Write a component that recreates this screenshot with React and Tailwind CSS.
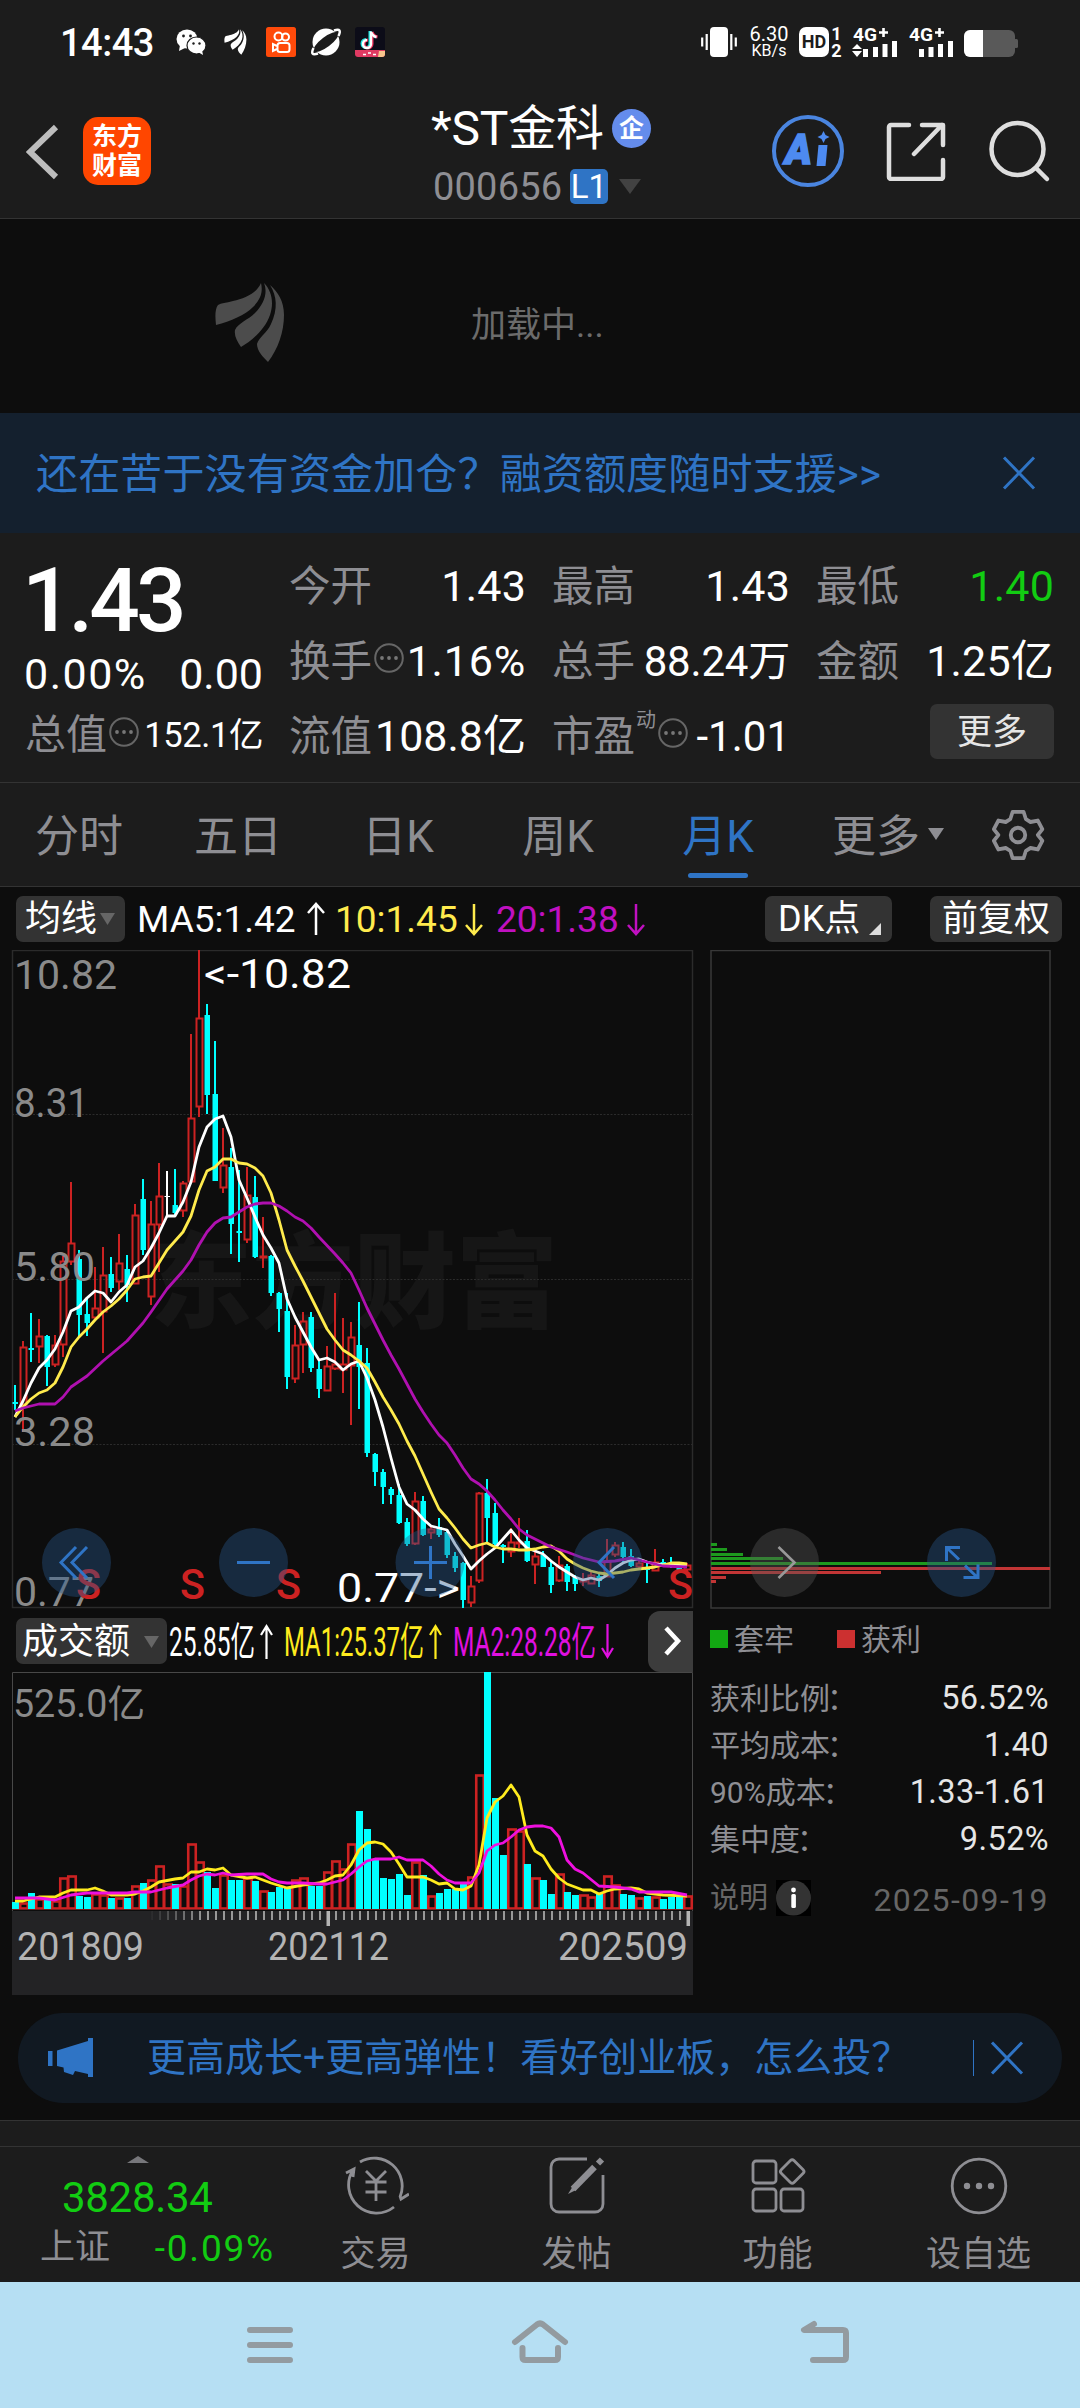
import React from "react";

const FONT = 'Roboto, "Noto Sans CJK SC", sans-serif';
const CYAN = "#00ffff";
const RED = "#cc2222";

// [color, high, bodyTop, bodyBottom, low] per month, in chart units
const CANDLES = [
  ["c", 1385, 1402, 1404, 1410], ["r", 1341, 1347, 1405, 1432], ["c", 1313, 1348, 1350, 1362], ["r", 1319, 1336, 1347, 1363],
  ["c", 1335, 1336, 1367, 1386], ["r", 1335, 1345, 1365, 1367], ["r", 1256, 1261, 1345, 1357], ["r", 1182, 1243, 1262, 1265],
  ["c", 1250, 1259, 1315, 1337], ["c", 1297, 1314, 1323, 1336], ["r", 1267, 1308, 1318, 1320], ["r", 1247, 1275, 1312, 1353],
  ["c", 1257, 1274, 1288, 1292], ["r", 1234, 1263, 1282, 1290], ["c", 1255, 1269, 1285, 1302], ["r", 1204, 1215, 1284, 1284],
  ["c", 1179, 1199, 1250, 1255], ["r", 1201, 1224, 1297, 1305], ["r", 1163, 1196, 1225, 1272], ["w", 1171, 1196, 1197, 1217],
  ["c", 1169, 1205, 1213, 1215], ["r", 1181, 1183, 1211, 1217], ["r", 1034, 1118, 1182, 1183], ["r", 950, 1018, 1107, 1117],
  ["c", 1004, 1015, 1095, 1114], ["c", 1041, 1094, 1181, 1181], ["r", 1128, 1165, 1188, 1193], ["c", 1148, 1167, 1224, 1254],
  ["c", 1170, 1231, 1233, 1262], ["r", 1167, 1195, 1240, 1243], ["c", 1176, 1197, 1257, 1258], ["r", 1217, 1256, 1257, 1268],
  ["c", 1255, 1256, 1293, 1296], ["c", 1292, 1293, 1309, 1332], ["c", 1293, 1311, 1377, 1389], ["r", 1325, 1345, 1379, 1383],
  ["r", 1312, 1321, 1345, 1373], ["c", 1312, 1317, 1368, 1372], ["c", 1360, 1369, 1389, 1398], ["r", 1346, 1366, 1391, 1391],
  ["r", 1293, 1364, 1369, 1370], ["r", 1318, 1364, 1370, 1393], ["r", 1322, 1337, 1366, 1425], ["c", 1302, 1345, 1367, 1409],
  ["c", 1348, 1363, 1453, 1457], ["c", 1453, 1454, 1472, 1486], ["c", 1469, 1472, 1487, 1504], ["c", 1487, 1489, 1495, 1504],
  ["c", 1484, 1495, 1523, 1524], ["c", 1518, 1522, 1544, 1546], ["r", 1492, 1501, 1544, 1545], ["c", 1496, 1501, 1535, 1536],
  ["r", 1527, 1529, 1533, 1539], ["c", 1518, 1527, 1535, 1537], ["c", 1530, 1532, 1555, 1558], ["c", 1552, 1556, 1568, 1572],
  ["c", 1562, 1563, 1600, 1608], ["r", 1576, 1586, 1603, 1607], ["r", 1492, 1493, 1581, 1583], ["c", 1479, 1493, 1518, 1542],
  ["c", 1503, 1513, 1544, 1546], ["c", 1544, 1545, 1547, 1563], ["r", 1528, 1542, 1552, 1557], ["r", 1518, 1542, 1543, 1548],
  ["c", 1530, 1541, 1561, 1562], ["r", 1548, 1556, 1565, 1584], ["c", 1551, 1555, 1567, 1567], ["c", 1560, 1567, 1585, 1593],
  ["r", 1556, 1565, 1581, 1582], ["c", 1564, 1566, 1582, 1591], ["c", 1575, 1577, 1584, 1591], ["r", 1573, 1579, 1582, 1586],
  ["r", 1572, 1575, 1584, 1584], ["c", 1572, 1576, 1581, 1587], ["r", 1539, 1561, 1577, 1577], ["r", 1542, 1545, 1555, 1557],
  ["c", 1542, 1547, 1557, 1562], ["c", 1549, 1556, 1566, 1567], ["r", 1560, 1563, 1567, 1569], ["c", 1563, 1567, 1570, 1583],
  ["r", 1549, 1562, 1571, 1571], ["c", 1559, 1562, 1564, 1567], ["c", 1557, 1565, 1567, 1568], ["c", 1565, 1568, 1570, 1573],
  ["r", 1563, 1565, 1570, 1571],
];

const VOLUME_TOPS = [
  1902, 1902, 1893, 1898, 1900, 1900, 1877, 1875, 1896, 1897, 1893, 1894, 1898, 1897, 1898, 1885, 1883, 1879, 1865, 1883, 1884,
  1885, 1843, 1861, 1872, 1888, 1874, 1880, 1880, 1877, 1881, 1890, 1892, 1887, 1888, 1879, 1877, 1886, 1886, 1871, 1860, 1868,
  1843, 1811, 1829, 1860, 1878, 1879, 1874, 1895, 1861, 1875, 1895, 1893, 1889, 1889, 1884, 1876, 1774, 1672, 1798, 1855, 1828,
  1830, 1864, 1877, 1880, 1894, 1873, 1892, 1895, 1894, 1896, 1894, 1875, 1884, 1894, 1895, 1897, 1896, 1896, 1899, 1897, 1897,
  1895,
];

// Moving averages: [month index, y]
const MA5 = [
  1417, 1401, 1383, 1368, 1360, 1349, 1332, 1311, 1307, 1298, 1291, 1293, 1302, 1292, 1285, 1267, 1261, 1248, 1233, 1216, 1216,
  1202, 1182, 1147, 1127, 1119, 1116, 1137, 1180, 1198, 1217, 1235, 1248, 1263, 1299, 1317, 1332, 1347, 1360, 1358, 1362, 1370,
  1364, 1361, 1378, 1400, 1427, 1458, 1487, 1504, 1510, 1519, 1526, 1528, 1530, 1544, 1556, 1569, 1561, 1554, 1548, 1539, 1530,
  1540, 1548, 1551, 1554, 1561, 1567, 1572, 1577, 1580, 1578, 1580, 1575, 1568, 1563, 1560, 1559, 1562, 1564, 1565, 1565, 1565,
  1566,
].map((y, i) => [i, y]);

const MA10 = [
  1417, 1407, 1399, 1393, 1390, 1383, 1367, 1347, 1337, 1329, 1320, 1312, 1306, 1299, 1290, 1279, 1277, 1276, 1263, 1250, 1241,
  1232, 1216, 1190, 1171, 1167, 1159, 1159, 1163, 1164, 1168, 1176, 1193, 1220, 1250, 1266, 1281, 1297, 1313, 1329, 1340, 1350,
  1355, 1361, 1368, 1382, 1397, 1410, 1424, 1441, 1456, 1474, 1492, 1509, 1518, 1528, 1539, 1548, 1545, 1543, 1547, 1549, 1549,
  1550, 1550, 1549, 1547, 1546, 1551, 1559, 1564, 1568, 1571, 1573, 1574, 1573, 1572, 1570, 1569, 1568, 1567, 1565, 1563, 1563,
  1564,
].map((y, i) => [i, y]);

const MA20 = [
  [0, 1411], [1, 1408], [2, 1406], [3, 1404], [5, 1404], [6, 1397], [7, 1387], [9, 1376], [11, 1361], [14, 1341], [15, 1332],
  [16, 1323], [17, 1312], [19, 1289], [21, 1271], [22, 1260], [23, 1245], [24, 1232], [25, 1223], [26, 1218], [27, 1217],
  [28, 1212], [29, 1207], [30, 1204], [31, 1203], [32, 1203], [33, 1206], [34, 1211], [35, 1217], [36, 1221], [37, 1228],
  [38, 1237], [40, 1254], [41, 1263], [42, 1273], [43, 1290], [44, 1308], [45, 1324], [46, 1340], [47, 1355], [48, 1369],
  [49, 1384], [50, 1399], [51, 1412], [52, 1424], [53, 1435], [54, 1443], [55, 1455], [56, 1468], [57, 1479], [58, 1484],
  [59, 1491], [60, 1500], [61, 1510], [62, 1519], [63, 1529], [64, 1535], [65, 1539], [67, 1547], [69, 1552], [71, 1558],
  [73, 1562], [75, 1561], [77, 1558], [79, 1562], [81, 1566], [84, 1567],
];

const VMA1 = [
  [0, 1901], [1, 1901], [2, 1899], [3, 1897], [5, 1897], [6, 1893], [7, 1890], [9, 1890], [10, 1888], [11, 1891], [12, 1895],
  [14, 1895], [15, 1894], [16, 1891], [17, 1887], [18, 1882], [20, 1879], [21, 1878], [22, 1872], [23, 1872], [24, 1869],
  [25, 1870], [26, 1868], [27, 1875], [29, 1878], [30, 1877], [32, 1883], [34, 1888], [36, 1885], [38, 1883], [39, 1880],
  [40, 1876], [41, 1875], [42, 1865], [43, 1850], [44, 1843], [45, 1842], [46, 1844], [47, 1852], [48, 1864], [49, 1877],
  [51, 1877], [52, 1880], [53, 1884], [54, 1883], [55, 1889], [56, 1890], [57, 1886], [58, 1865], [59, 1818], [60, 1802],
  [61, 1796], [62, 1785], [63, 1797], [64, 1835], [65, 1851], [66, 1856], [67, 1869], [68, 1878], [69, 1884], [71, 1890],
  [72, 1890], [73, 1894], [74, 1891], [75, 1889], [77, 1888], [78, 1889], [79, 1893], [81, 1895], [84, 1896],
];

const VMA2 = [
  [0, 1898], [3, 1898], [5, 1900], [7, 1895], [9, 1893], [14, 1893], [15, 1892], [17, 1892], [19, 1888], [21, 1885], [22, 1880],
  [23, 1876], [24, 1874], [25, 1875], [26, 1873], [27, 1875], [29, 1874], [31, 1874], [32, 1879], [33, 1882], [34, 1883],
  [36, 1883], [38, 1884], [39, 1884], [41, 1880], [42, 1874], [43, 1867], [44, 1861], [45, 1859], [47, 1859], [48, 1857],
  [49, 1860], [51, 1860], [52, 1866], [53, 1874], [54, 1880], [55, 1883], [57, 1883], [58, 1873], [59, 1851], [60, 1845],
  [61, 1843], [62, 1837], [63, 1830], [64, 1827], [65, 1826], [66, 1826], [67, 1828], [68, 1837], [69, 1860], [70, 1869],
  [71, 1873], [73, 1886], [75, 1887], [77, 1889], [78, 1892], [82, 1892], [84, 1895],
];

const px = (i) => 15 + i * 8;
const line = (pts) => pts.map(([i, y]) => `${px(i)},${y}`).join(" ");

function SvgText({ x, y, w, size = 40, fill = "#8a8a8a", weight = 400, children }) {
  return (
    <text x={x} y={y} fontSize={size} fill={fill} fontWeight={weight} textLength={w} lengthAdjust="spacingAndGlyphs" fontFamily={FONT}>
      {children}
    </text>
  );
}

function StatusBar() {
  return (
    <div className="flex h-[84px] shrink-0 items-center pl-[60px] text-white">
      <span className="w-[116px] pt-px text-[38px] leading-none font-medium tracking-[-0.5px]">14:43</span>
      <svg width="30" height="26" viewBox="0 0 30 26">
        <ellipse cx="11" cy="10" rx="10.5" ry="9.5" fill="#fff" />
        <path d="M4 16l-1 6 6-3z" fill="#fff" />
        <ellipse cx="20.500" cy="16.500" rx="9.500" ry="8.500" fill="#fff" stroke="#1c1c1c" strokeWidth="1.200" />
        <path d="M22 23l5 3-1-5z" fill="#fff" />
        <circle cx="7.500" cy="7" r="1.400" fill="#1c1c1c" /><circle cx="14.500" cy="7" r="1.400" fill="#1c1c1c" />
        <circle cx="17.500" cy="14.500" r="1.200" fill="#1c1c1c" /><circle cx="23.500" cy="14.500" r="1.200" fill="#1c1c1c" />
      </svg>
      <svg width="23" height="26" viewBox="215 282 70 81" className="ml-[18px]"><Wing fill="#fff" /></svg>
      <svg width="30" height="30" viewBox="0 0 30 30" className="ml-[19px]">
        <rect width="30" height="30" rx="2.500" fill="#ff4a0a" />
        <g fill="none" stroke="#fff" strokeWidth="2">
          <circle cx="12.500" cy="9.500" r="4" /><circle cx="19.500" cy="10" r="3.500" />
          <rect x="11.500" y="16" width="12" height="9" rx="2.500" /><path d="M11 19l-4-2v7l4-2" />
        </g>
      </svg>
      <svg width="32" height="30" viewBox="0 0 32 30" className="ml-[14px]">
        <circle cx="16" cy="15" r="13.500" fill="#fff" />
        <ellipse cx="16" cy="15" rx="15" ry="5" transform="rotate(-37 16 15)" fill="#1c1c1c" />
        <path d="M24 3.500c6-2 7 0 4.500 5.500M8 26.500c-6 2-7 0-4.500-5.500" fill="none" stroke="#fff" strokeWidth="2.500" />
      </svg>
      <svg width="30" height="30" viewBox="0 0 30 30" className="ml-[13px]">
        <rect width="30" height="30" rx="3" fill="#0c0c18" />
        <path d="M15 4v12.500a4 4 0 1 1-4-4M15 5c1 3 3 4.500 6 5" fill="none" stroke="#25e5e5" strokeWidth="3" />
        <path d="M17 5v12a4 4 0 1 1-4-4M17 5c1 3 3 4.500 5.500 5" fill="none" stroke="#f0315c" strokeWidth="3" />
        <path d="M16 4.500v12.500a4 4 0 1 1-4-4M16 5c1 3 3 4.500 5.500 5" fill="none" stroke="#fff" strokeWidth="2.400" />
        <path d="M0 23h30v4a3 3 0 0 1-3 3H3a3 3 0 0 1-3-3z" fill="#e03a62" />
        <path d="M24 24h6v3a3 3 0 0 1-3 3h-4z" fill="#f7c48c" />
        <path d="M8 27.500h3M13 26h3M18 27.500h3" stroke="#fff" strokeWidth="1.500" />
      </svg>
      <svg width="36" height="30" viewBox="0 0 36 30" className="ml-[316px]">
        <rect x="9" width="18" height="30" rx="4" fill="#fff" />
        <path d="M5.700 7v16M1.200 10.500v9M30.300 7v16M34.800 10.500v9" stroke="#fff" strokeWidth="2.200" />
      </svg>
      <div className="ml-[12px] flex w-[40px] flex-col items-center leading-none">
        <span className="text-[20px] leading-[18px]">6.30</span>
        <span className="text-[16px] leading-[16px]">KB/s</span>
      </div>
      <div className="ml-[10px] flex h-[30px] w-[30px] items-center justify-center rounded-[7px] bg-white text-[18px] leading-none font-bold text-[#1c1c1c]">HD</div>
      <div className="ml-[2px] flex w-[11px] flex-col items-center text-[18px] leading-[17px] font-bold"><span>1</span><span>2</span></div>
      <svg width="46" height="31" viewBox="0 0 46 31" className="ml-[10px] overflow-visible">
        <SvgText x={1} y={14} w={24} size={19} fill="#fff" weight={700}>4G</SvgText>
        <path d="M31.500 1v9M27 5.500h9" stroke="#fff" strokeWidth="2.600" />
        <path d="M0 22l5-5 5 5zM0 24h10l-5 6z" fill="#fff" />
        <path d="M13.500 22v8M23.500 20v10M33 17v13M42.500 14v16" stroke="#fff" strokeWidth="5" />
      </svg>
      <svg width="46" height="31" viewBox="0 0 46 31" className="ml-[10px] overflow-visible">
        <SvgText x={1} y={14} w={24} size={19} fill="#fff" weight={700}>4G</SvgText>
        <path d="M31.500 1v9M27 5.500h9" stroke="#fff" strokeWidth="2.600" />
        <path d="M13.500 22v8M23 20v10M32.500 17v13M42.500 14v16" stroke="#fff" strokeWidth="5" />
      </svg>
      <svg width="55" height="28" viewBox="0 0 55 28" className="mt-[3px] ml-[10px]">
        <rect width="51" height="27" rx="6" fill="#595959" /><rect x="50" y="9" width="4" height="9" rx="1.500" fill="#595959" />
        <path d="M19 0H6a6 6 0 0 0-6 6v15a6 6 0 0 0 6 6h13z" fill="#fff" />
      </svg>
    </div>
  );
}

function Wing({ fill }) {
  return (
    <g fill={fill}>
      <path d="M261 283c-5 11-16 15-28 18-7 2-12 2-15 4-3 4-3 11-2 20 15-4 29-10 37-18 8-8 10-15 8-24z" />
      <path d="M264 283c4 10 0 21-9 30-7 7-17 10-20 17-1 6 2 11 6 17 12-7 24-18 29-32 4-12 2-24-6-32z" />
      <path d="M270 285c8 7 14 16 14 30 0 17-6 34-16 47-5-5-11-11-11-18 2-7 10-11 14-20 7-15 6-28-1-39z" />
    </g>
  );
}

function Header() {
  return (
    <div className="flex h-[134px] shrink-0 text-white">
      <svg width="34" height="58" viewBox="0 0 34 58" className="mt-[39px] ml-[26px]">
        <path d="M30 4L4 29l26 25" fill="none" stroke="#bdbdbd" strokeWidth="6" />
      </svg>
      <div className="mt-[33px] ml-[23px] flex h-[68px] w-[68px] flex-col items-center justify-center rounded-[15px] bg-[#ff4600] text-[25px] leading-[29px] font-bold">
        <span>东方</span><span>财富</span>
      </div>
      <div className="ml-[280px] w-[231px]">
        <div className="mt-[17px] flex h-[54px] items-center">
          <span className="w-[174px] pt-[2px] text-[48px] leading-none tracking-[-0.2px] whitespace-nowrap">*ST金科</span>
          <span className="ml-[7px] flex h-[39px] w-[39px] items-center justify-center rounded-full bg-[#648cec] text-[25px] leading-none font-bold">企</span>
        </div>
        <div className="mt-[10px] flex h-[42px] items-center">
          <span className="w-[135px] pt-[2px] pl-[2px] text-[38px] leading-none tracking-[0.2px] text-[#8e8e93]">000656</span>
          <span className="ml-[4px] flex h-[35px] w-[38px] items-center justify-center rounded-[5px] bg-[#2f74c5] text-[33px] leading-none">L1</span>
          <svg width="22" height="15" viewBox="0 0 22 15" className="ml-[11px]"><path d="M0 0h22L11 15z" fill="#424242" /></svg>
        </div>
      </div>
      <svg width="74" height="74" viewBox="0 0 74 74" className="mt-[30px] ml-[109px]">
        <circle cx="37" cy="37" r="34" fill="none" stroke="#4a85e0" strokeWidth="4" />
        <text x="14" y="50" fontSize="42" fontWeight="900" fontStyle="italic" fill="#4d8af0" stroke="#4d8af0" strokeWidth="1.500" textLength="27" lengthAdjust="spacingAndGlyphs" fontFamily={FONT}>A</text>
        <path d="M47.500 31h9l-2 21h-9z" fill="#4d8af0" />
        <path d="M52.500 17l2 4 4 2-4 2-2 4-2-4-4-2 4-2z" fill="#4d8af0" />
      </svg>
      <svg width="60" height="60" viewBox="0 0 60 60" className="mt-[37px] ml-[41px]">
        <g fill="none" stroke="#dedede" strokeWidth="4.500" strokeLinecap="round" strokeLinejoin="round">
          <path d="M23 4H5a2 2 0 0 0-2 2v50a2 2 0 0 0 2 2h50a2 2 0 0 0 2-2V39M36 4h21v20M56 4L28 33" />
        </g>
      </svg>
      <svg width="64" height="64" viewBox="0 0 64 64" className="mt-[35px] ml-[42px]">
        <g fill="none" stroke="#dedede" strokeWidth="4.500" strokeLinecap="round">
          <circle cx="29.500" cy="30" r="26" /><path d="M48 49l11 11" />
        </g>
      </svg>
    </div>
  );
}

function Dots() {
  return (
    <svg width="32" height="32" viewBox="0 0 32 32" className="mt-[-8px] ml-[1px]">
      <circle cx="16" cy="16" r="13.800" fill="none" stroke="#666" strokeWidth="2" />
      <g fill="#777"><circle cx="9" cy="16" r="1.900" /><circle cx="16" cy="16" r="1.900" /><circle cx="23" cy="16" r="1.900" /></g>
    </svg>
  );
}

function Row({ label, value, dots, sup, cls = "text-[43px] tracking-[0.2px] text-white" }) {
  return (
    <div className="flex h-[75px] items-center leading-none whitespace-nowrap">
      <span className="text-[41.5px] text-[#8e8e93]">{label}</span>
      {sup && <span className="mt-[-34px] ml-[1px] text-[20px] text-[#8e8e93]">{sup}</span>}
      {dots && <Dots />}
      <span className={`ml-auto ${cls}`}>{value}</span>
    </div>
  );
}

function Quote() {
  return (
    <div className="flex h-[249px] shrink-0 gap-[26px] pt-[16px] pr-[24px] pl-[25px]">
      <div className="flex w-[238px] flex-col text-white">
        <div className="ml-[-3px] flex h-[102px] items-center text-[89px] leading-none font-medium tracking-[-4px]">1.43</div>
        <div className="flex h-[46px] items-center justify-between text-[43px] leading-none">
          <span className="ml-[-1px] tracking-[1.5px]">0.00%</span><span>0.00</span>
        </div>
        <div className="flex h-[77px] items-center text-[34.5px] leading-none whitespace-nowrap">
          <span className="text-[41px] text-[#8e8e93]">总值</span><Dots />
          <span className="ml-auto tracking-[-0.4px]">152.1亿</span>
        </div>
      </div>
      <div className="w-[237px]">
        <Row label="今开" value="1.43" /><Row label="换手" dots value="1.16%" cls="text-[43px] tracking-[0.8px] text-white" /><Row label="流值" value="108.8亿" cls="text-[43px] text-white" />
      </div>
      <div className="w-[238px]">
        <Row label="最高" value="1.43" /><Row label="总手" value="88.24万" cls="text-[42px] tracking-[-0.2px] text-white" /><Row label="市盈" sup="动" dots value="-1.01" cls="text-[42px] text-white" />
      </div>
      <div className="w-[238px]">
        <Row label="最低" value="1.40" cls="text-[43px] tracking-[0.2px] text-[#12cc12]" /><Row label="金额" value="1.25亿" />
        <div className="mt-[5px] ml-auto flex h-[55px] w-[124px] items-center justify-center rounded-[7px] bg-[#333] pt-px text-[35px] leading-none text-[#e6e6e6]">更多</div>
      </div>
    </div>
  );
}

function Tabs() {
  const cell = "flex h-full w-[160px] items-center justify-center";
  return (
    <div className="flex h-[105px] shrink-0 items-center border-y border-[#333] pt-[4px] text-[44px] leading-none text-[#8e8e93]">
      <div className="flex w-[158px] justify-center">分时</div>
      <div className={cell}>五日</div>
      <div className={cell}>日K</div>
      <div className={cell}>周K</div>
      <div className={`${cell} relative text-[#2f74c5]`}>
        月K<span className="absolute bottom-[8px] h-[5px] w-[60px] rounded-full bg-[#2f74c5]" />
      </div>
      <div className="ml-[34px] flex items-center">
        更多<svg width="16" height="12" viewBox="0 0 16 12" className="mt-[-6px] ml-[8px]"><path d="M0 0h16L8 12z" fill="#8e8e93" /></svg>
      </div>
      <svg width="54" height="54" viewBox="0 0 56 56" className="mt-[-4px] ml-[47px]">
        <g fill="none" stroke="#8e8e93" strokeWidth="4" strokeLinejoin="round">
          <path d="M22 4h12l2.500 7.500 5 3 8-1.500 5 9-5 6v0l5 6-5 9-8-1.500-5 3L34 52H22l-2.500-7.500-5-3-8 1.500-5-9 5-6-5-6 5-9 8 1.500 5-3z" transform="translate(1.500 0) scale(.95 1)" />
          <circle cx="28" cy="28" r="7.500" />
        </g>
      </svg>
    </div>
  );
}

function Arrow({ down, color, cls }) {
  return (
    <svg width="18" height="34" viewBox="0 0 18 34" className={cls}>
      <path d={down ? "M9 2v29M1 23l8 9 8-9" : "M9 33V4M1 11l8-9 8 9"} fill="none" stroke={color} strokeWidth="2.500" />
    </svg>
  );
}

function Legend() {
  return (
    <div className="flex h-[63px] shrink-0 items-center pl-[16px] text-[37px] leading-none text-white">
      <div className="flex h-[46px] w-[109px] items-center rounded-[7px] bg-[#333] pt-px pl-[9px] text-[36px]">
        均线<svg width="15" height="12" viewBox="0 0 15 12" className="ml-[3px]"><path d="M0 0h15L7.500 12z" fill="#666" /></svg>
      </div>
      <span className="ml-[11px] w-[168px] pt-[2px] pl-px">MA5:1.42</span>
      <Arrow color="#fff" cls="ml-[3px]" />
      <span className="ml-[10px] w-[130px] pt-[2px] text-[#ffeb4d]">10:1.45</span>
      <Arrow down color="#ffeb4d" />
      <span className="ml-[13px] w-[131px] pt-[2px] text-[#c010c0]">20:1.38</span>
      <Arrow down color="#c010c0" />
      <div className="ml-[120px] flex h-[46px] w-[127px] items-center rounded-[7px] bg-[#333] pt-px pl-[13px] text-[36px]">
        DK点<svg width="12" height="12" viewBox="0 0 12 12" className="mt-[20px] ml-[9px]"><path d="M12 0v12H0z" fill="#ddd" /></svg>
      </div>
      <div className="ml-[38px] flex h-[46px] w-[132px] items-center justify-center rounded-[7px] bg-[#333] pt-px text-[36px]">前复权</div>
    </div>
  );
}

function Mark({ x }) {
  return <SvgText x={x} y={1599} w={25} size={43} fill={RED} weight={500}>S</SvgText>;
}

function PriceChart() {
  return (
    <svg width="694" height="660" viewBox="0 950 694 660" className="shrink-0">
      <SvgText x={150} y={1320} w={408} size={104} fill="#161616" weight={900}>东方财富</SvgText>
      <g stroke="#2b2b2b" strokeWidth="1" strokeDasharray="2 1.500">
        <path d="M12 1114.500H692M12 1279.500H692M12 1444.500H692" />
      </g>
      <rect x="12.500" y="950.500" width="680" height="657" fill="none" stroke="#2b2b2b" strokeWidth="1.500" />
      {CANDLES.map(([k, h, t, b, l], i) => {
        const x = px(i);
        if (k === "r")
          return (
            <g key={i} stroke={RED} strokeWidth="2" fill="none">
              <path d={`M${x} ${h}V${t}M${x} ${b}V${l}`} />
              <rect x={x - 2.5} y={t + 0.5} width="6" height={Math.max(b - t - 1, 1)} />
            </g>
          );
        const c = k === "w" ? "#fff" : CYAN;
        return (
          <g key={i} fill={c}>
            <rect x={x - 1} y={h} width="2" height={l - h} />
            <rect x={x - 2.5} y={t} width="5.500" height={b - t} />
          </g>
        );
      })}
      <g fill="none" strokeWidth="2.800" strokeLinejoin="round">
        <polyline points={line(MA5)} stroke="#fff" />
        <polyline points={line(MA10)} stroke="#ffeb4d" />
        <polyline points={line(MA20)} stroke="#b010b0" />
      </g>
      <SvgText x={14} y={989} w={103}>10.82</SvgText>
      <SvgText x={14} y={1117} w={75}>8.31</SvgText>
      <SvgText x={14} y={1281} w={81}>5.80</SvgText>
      <SvgText x={14} y={1446} w={81}>3.28</SvgText>
      <SvgText x={14} y={1606} w={80}>0.77</SvgText>
      <SvgText x={204} y={988} w={147} fill="#fff">&lt;-10.82</SvgText>
      <SvgText x={337} y={1602} w={123} fill="#fff">0.77-&gt;</SvgText>
      <Mark x={76} /><Mark x={180} /><Mark x={276} /><Mark x={668} />
      <g fill="rgb(40 88 140 / .4)">
        <circle cx="76.500" cy="1562.500" r="34.500" /><circle cx="253.500" cy="1562.500" r="34.500" />
        <circle cx="430" cy="1562.500" r="34.500" /><circle cx="607.500" cy="1562.500" r="34.500" />
      </g>
      <g fill="none" stroke="#2f74c5" strokeWidth="3">
        <path d="M76 1547l-15 15.500 15 15.500M87 1547l-15 15.500 15 15.500M237 1562.500h33M414 1562.500h33M430.500 1546v33M614 1547l-15 15.500 15 15.500" />
      </g>
    </svg>
  );
}

function ChipChart() {
  const bars = [
    [1544, 6, "g"], [1549, 16, "g"], [1554, 32, "g"], [1558, 72, "g"], [1563, 281, "g"],
    [1568, 339, "r"], [1572, 170, "r"], [1577, 15, "r"], [1581, 5, "r"],
  ];
  return (
    <svg width="386" height="660" viewBox="694 950 386 660" className="shrink-0">
      <rect x="711" y="950.500" width="339" height="657.500" fill="none" stroke="#383838" strokeWidth="1.500" />
      {bars.map(([y, w, k]) => (
        <rect key={y} x="711" y={y - 1} width={w} height="3" fill={k === "g" ? "#1e9a1e" : "#c23535"} />
      ))}
      <circle cx="784.500" cy="1562.500" r="34.500" fill="rgb(88 88 88 / .4)" />
      <circle cx="961.500" cy="1562.500" r="34.500" fill="rgb(40 88 140 / .4)" />
      <path d="M778.500 1547l16 15.500-16 15.500" fill="none" stroke="#999" strokeWidth="2.600" />
      <path d="M946.500 1561v-13.500H960M947 1548l12 11.500M978 1564.500v13H963.500M977 1577l-12-11.500" fill="none" stroke="#2f74c5" strokeWidth="3" />
    </svg>
  );
}

function VolumeHeader() {
  return (
    <div className="flex h-[62px] items-center pl-[16px] text-white">
      <div className="flex h-[46px] w-[151px] items-center rounded-[7px] bg-[#333] pt-px pl-[6px] text-[36px] leading-none">
        成交额<svg width="15" height="12" viewBox="0 0 15 12" className="ml-[14px]"><path d="M0 0h15L7.500 12z" fill="#666" /></svg>
      </div>
      <svg width="474" height="46" viewBox="167 1617 474 46" className="shrink-0 overflow-visible">
        <SvgText x={169} y={1655} w={86} size={40} fill="#fff">25.85亿</SvgText>
        <SvgText x={284} y={1655} w={140} size={40} fill="#ffeb1e">MA1:25.37亿</SvgText>
        <SvgText x={453} y={1655} w={143} size={40} fill="#e010e0">MA2:28.28亿</SvgText>
        <g fill="none" strokeWidth="2.200">
          <path d="M266.500 1658v-33M261 1634l5.500-9 5.500 9" stroke="#fff" />
          <path d="M435.500 1658v-33M430 1634l5.500-9 5.500 9" stroke="#ffeb1e" />
          <path d="M607.500 1623v33M602 1647l5.500 9 5.500-9" stroke="#e010e0" />
        </g>
      </svg>
      <div className="ml-[7px] flex h-[61px] w-[45px] items-center justify-center rounded-l-[12px] bg-[#3c3c3c]">
        <svg width="18" height="30" viewBox="0 0 18 30" className="ml-[4px]"><path d="M2 2l12 13L2 28" fill="none" stroke="#fff" strokeWidth="4.500" /></svg>
      </div>
    </div>
  );
}

function VolumeChart() {
  return (
    <svg width="694" height="324" viewBox="0 1672 694 324" className="block">
      <defs>
        <linearGradient id="tickFade" x1="0" x2="1"><stop offset="0" stopColor="#232325" /><stop offset="1" stopColor="#232325" stopOpacity="0" /></linearGradient>
      </defs>
      <path d="M12.500 1911V1672.500H692.500V1911" fill="none" stroke="#484848" />
      <SvgText x={13} y={1717} w={132} size={38}>525.0亿</SvgText>
      {CANDLES.map(([k], i) => {
        const x = px(i);
        const t = VOLUME_TOPS[i];
        return k === "c" ? (
          <rect key={i} x={x - 3} y={t} width="7" height={1909 - t} fill={CYAN} />
        ) : (
          <rect key={i} x={x - 2.75} y={t + 1.5} width="7.500" height={1907 - t} fill="#0d0d0d" stroke={RED} strokeWidth="2.600" />
        );
      })}
      <path d="M12 1909.500H693" stroke="#7a2020" />
      <g fill="none" strokeWidth="2.800" strokeLinejoin="round">
        <polyline points={line(VMA1)} stroke="#ffeb1e" />
        <polyline points={line(VMA2)} stroke="#ef10df" />
      </g>
      <rect x="12" y="1911" width="681" height="84" fill="#232325" />
      {Array.from({ length: 68 }, (_, n) => (
        <rect key={n} x={151 + n * 8} y="1911" width="2" height="9" fill="#999" />
      ))}
      <rect x="148" y="1911" width="56" height="9" fill="url(#tickFade)" />
      <rect x="326.500" y="1911" width="3.500" height="15" fill="#b4b4b4" /><rect x="686.500" y="1911" width="3.500" height="15" fill="#b4b4b4" />
      <SvgText x={17} y={1960} w={127} size={38} fill="#b4b4b4">201809</SvgText>
      <SvgText x={268} y={1960} w={121} size={38} fill="#b4b4b4">202112</SvgText>
      <SvgText x={558} y={1960} w={130} size={38} fill="#b4b4b4">202509</SvgText>
    </svg>
  );
}

function ChipInfo() {
  const rows = [["获利比例", "56.52%"], ["平均成本", "1.40"], ["90%成本", "1.33-1.61"], ["集中度", "9.52%"]];
  return (
    <div className="ml-[16px] flex w-[339px] flex-col pt-[14px] text-[30px] leading-none text-[#8e8e93]">
      <div className="flex h-[30px] items-center">
        <span className="h-[18px] w-[18px] bg-[#12a812]" /><span className="ml-[6px] pt-[2px]">套牢</span>
        <span className="ml-[43px] h-[18px] w-[18px] bg-[#cc3030]" /><span className="ml-[6px] pt-[2px]">获利</span>
      </div>
      <div className="mt-[21px]">
        {rows.map(([a, b]) => (
          <div key={a} className="flex h-[47px] items-center justify-between whitespace-nowrap">
            <span>{a}<span className="-ml-[3px]">：</span></span><span className="text-[32.5px] tracking-[0.4px] text-[#e6e6e6]">{b}</span>
          </div>
        ))}
      </div>
      <div className="mt-[17px] flex h-[36px] items-center text-[#666]">
        <span className="pt-px text-[29px]">说明</span>
        <svg width="35" height="36" viewBox="0 0 35 36" className="ml-[8px]">
          <rect width="35" height="36" fill="#000" /><circle cx="17.500" cy="18" r="17.500" fill="#333" />
          <circle cx="17.500" cy="10" r="2.400" fill="#fff" /><rect x="15.300" y="14" width="4.600" height="14" rx="1.500" fill="#fff" />
        </svg>
        <span className="ml-auto pt-[3px] text-[32px] tracking-[1.4px]">2025-09-19</span>
      </div>
    </div>
  );
}

function Cross({ cls }) {
  return (
    <svg width="34" height="34" viewBox="0 0 34 34" className={cls}>
      <path d="M2 1.500l30 31M32 1.500l-30 31" stroke="#2f74c5" strokeWidth="3" />
    </svg>
  );
}

function Notice() {
  return (
    <div className="mx-[18px] mt-[17px] flex h-[90px] shrink-0 items-center rounded-full bg-[#111922] text-[39px] leading-none whitespace-nowrap text-[#2f74c5]">
      <svg width="46" height="40" viewBox="0 0 46 40" className="ml-[30px]">
        <path d="M0 13h4.500v15H0zM9 12.500L40 3V0h5v39h-5v-3l-13-3-2 4-9-3-.500-4.500L9 28z" fill="#2f74c5" />
      </svg>
      <span className="ml-[53px] w-[826px] pt-px">更高成长+更高弹性！看好创业板，怎么投？</span>
      <span className="h-[36px] w-px shrink-0 bg-[#2f74c5]" />
      <Cross cls="ml-[16px] shrink-0" />
    </div>
  );
}

function BottomBar() {
  const items = [
    ["交易", (
      <g key="a">
        <path d="M17 9a28 28 0 0 1 40 35M51 54A28 28 0 0 1 10 17M3 20l8-4-1 8M57 43l1 3 8-5" />
        <path d="M23 18l10 10 10-10M33 28v20M22.500 29h21M22.500 39h21" />
      </g>
    )],
    ["发帖", (
      <g key="b">
        <path d="M43 6H15a8 8 0 0 0-8 8v37a8 8 0 0 0 8 8h36a8 8 0 0 0 8-8V22" />
        <path d="M50.500 14L29 36" strokeWidth="6.500" /><path d="M54 10.500l4-4" strokeWidth="6" /><path d="M29 33l-5 8 8-4z" fill="#8e8e93" stroke="none" />
      </g>
    )],
    ["功能", (
      <g key="c">
        <rect x="8" y="8" width="23" height="22" rx="3" /><rect x="8" y="36" width="23" height="22" rx="3" /><rect x="36" y="36" width="22" height="22" rx="3" />
        <rect x="38.200" y="9.500" width="18" height="18" rx="2.500" transform="rotate(45 47.200 18.500)" />
      </g>
    )],
    ["设自选", (
      <g key="d">
        <circle cx="33" cy="33" r="26.800" />
        <g fill="#8e8e93" stroke="none"><circle cx="21" cy="33" r="3.200" /><circle cx="33" cy="33" r="3.200" /><circle cx="45" cy="33" r="3.200" /></g>
      </g>
    )],
  ];
  return (
    <div className="flex h-[136px] shrink-0 border-t border-[#333] text-[35px] leading-none text-[#8e8e93]">
      <div className="w-[275px]">
        <svg width="22" height="7" viewBox="0 0 22 7" className="mt-[9px] ml-[127px] block"><path d="M0 7L11 0l11 7z" fill="#77777b" /></svg>
        <div className="mt-[14px] ml-[62px] text-[42px] leading-[42px] tracking-[-0.3px] text-[#12cc12]">3828.34</div>
        <div className="mt-[9px] flex items-center pl-[40px]">
          <span className="w-[115px]">上证</span><span className="pt-[2px] text-[37px] tracking-[1.8px] text-[#12cc12]">-0.09%</span>
        </div>
      </div>
      {items.map(([t, icon]) => (
        <div key={t} className="flex w-[201px] flex-col items-center">
          <svg width="66" height="66" viewBox="0 0 66 66" className="mt-[6px]">
            <g fill="none" stroke="#8e8e93" strokeWidth="2.800">{icon}</g>
          </svg>
          <span className="mt-[18px]">{t}</span>
        </div>
      ))}
    </div>
  );
}

function NavBar() {
  return (
    <div className="flex h-[126px] shrink-0 bg-[#b6dff3] pt-[37px] pl-[237px]">
      <svg width="66" height="50" viewBox="237 2319 66 50"><path d="M250 2330h40M250 2345h40M250 2360h40" stroke="#939ba0" strokeWidth="6" strokeLinecap="round" /></svg>
      <svg width="66" height="50" viewBox="507 2319 66 50" className="ml-[204px]">
        <g fill="none" stroke="#939ba0" strokeWidth="6" strokeLinecap="round" strokeLinejoin="round">
          <path d="M515 2342l22-17.500q3-2.200 6 0l22 17.500M522.500 2348v9q0 3 3 3h29.500q3 0 3-3v-9" />
        </g>
      </svg>
      <svg width="66" height="50" viewBox="792 2319 66 50" className="ml-[219px]">
        <g fill="none" stroke="#939ba0" strokeWidth="6" strokeLinecap="round" strokeLinejoin="round">
          <path d="M814 2324l-10 6h39q3 0 3 3v24q0 3-3 3h-30" />
        </g>
      </svg>
    </div>
  );
}

export default function App() {
  return (
    <div className="flex h-[2408px] w-[1080px] flex-col overflow-hidden bg-[#0d0d0d]" style={{ fontFamily: FONT }}>
      <div className="shrink-0 border-b border-[#333] bg-[#1c1c1c]">
        <StatusBar />
        <Header />
      </div>
      <div className="flex h-[194px] shrink-0 items-center pl-[215px]">
        <svg width="70" height="81" viewBox="215 282 70 81" className="mt-[12px]"><Wing fill="#4c4c4c" /></svg>
        <span className="mt-[19px] ml-[186px] text-[35px] leading-none text-[#6b6b6b]">加载中...</span>
      </div>
      <div className="flex h-[120px] shrink-0 items-center bg-[#14202e] pl-[36px] text-[42px] leading-none whitespace-nowrap text-[#2f74c5]">
        <span className="w-[966px] pt-[3px] tracking-[0.15px]">还在苦于没有资金加仓？融资额度随时支援&gt;&gt;</span>
        <Cross />
      </div>
      <div className="shrink-0 bg-[#1c1c1c]">
        <Quote />
        <Tabs />
      </div>
      <Legend />
      <div className="flex shrink-0"><PriceChart /><ChipChart /></div>
      <div className="flex h-[386px] shrink-0">
        <div className="w-[694px] shrink-0"><VolumeHeader /><VolumeChart /></div>
        <ChipInfo />
      </div>
      <Notice />
      <div className="mt-[17px] h-[26px] shrink-0 border-t border-[#333] bg-[#1c1c1c]" />
      <div className="shrink-0 bg-[#1c1c1c]"><BottomBar /></div>
      <NavBar />
    </div>
  );
}
